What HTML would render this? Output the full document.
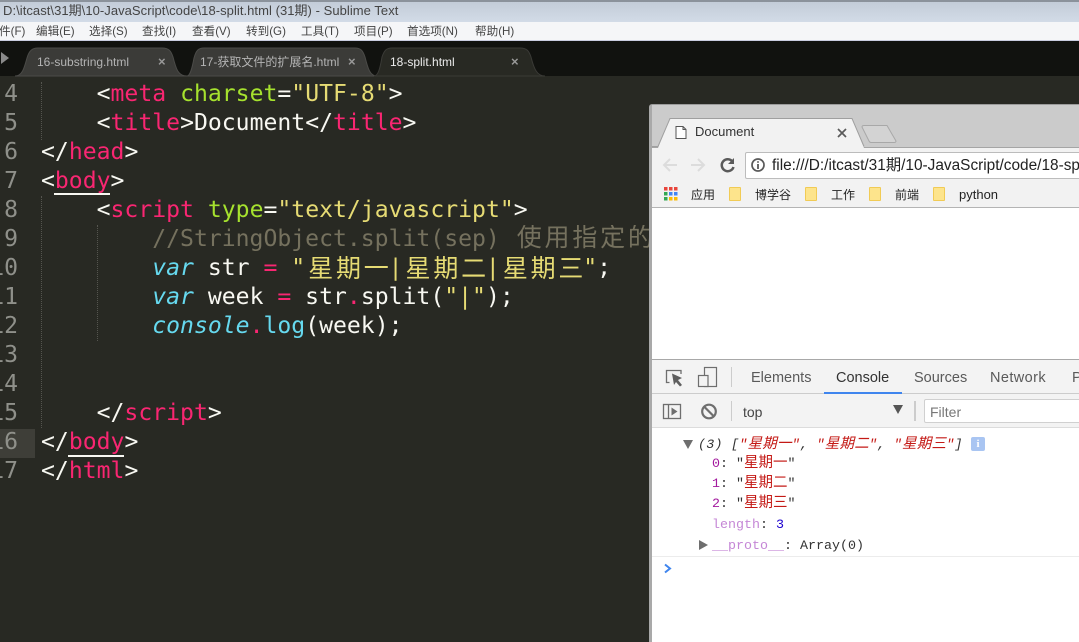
<!DOCTYPE html>
<html><head><meta charset="utf-8"><style>
html,body{margin:0;padding:0;width:1079px;height:642px;overflow:hidden;background:#282923}
*{box-sizing:border-box}
.a{position:absolute;white-space:pre}
.ui{font-family:"Liberation Sans","Noto Sans CJK SC",sans-serif}
.l{position:absolute;left:41px;height:29px;line-height:29px;font-family:"DejaVu Sans Mono","Liberation Mono",monospace;font-size:23.1px;color:#f8f8f2;white-space:pre}
.n{position:absolute;left:0;width:18px;text-align:right;height:29px;line-height:29px;font-family:"DejaVu Sans Mono",monospace;font-size:23.1px;color:#8f908a;white-space:pre;overflow:hidden;direction:rtl}
.p{color:#f92672}.g{color:#a6e22e}.y{color:#e6db74}.c{color:#75715e}.b{color:#66d9ef}.i{font-style:italic}
.z{font-family:"Noto Sans CJK SC",sans-serif;font-size:25px;letter-spacing:2.8px;line-height:0;position:relative;left:3px}
.z.d{top:2px}
.m{position:absolute;top:23px;height:18px;line-height:18px;font-size:11.6px;color:#444;font-family:"Liberation Sans","Noto Sans CJK SC",sans-serif;white-space:pre}
.t{position:absolute;top:54px;font-size:12px;line-height:16px;height:16px;font-family:"Liberation Sans","Noto Sans CJK SC",sans-serif;color:#b4b4b4;white-space:pre}
.x{position:absolute;top:54px;font-size:13px;line-height:16px;color:#999;font-weight:bold;font-family:"Liberation Sans",sans-serif}
.dt{position:absolute;top:369px;font-size:14.5px;line-height:18px;color:#5a5a5a;font-family:"Liberation Sans",sans-serif;white-space:pre}
.con{position:absolute;font-family:"Liberation Mono","Noto Sans CJK SC",monospace;font-size:13.33px;line-height:16px;height:16px;white-space:pre;color:#333}
.r{color:#c41a16}.pu{color:#a31a9e}.pl{color:#c587d6}
.con .z2{font-family:"Noto Sans CJK SC",sans-serif;font-size:14.5px;line-height:0}
.bm{position:absolute;top:187px;font-size:12px;line-height:16px;color:#222;font-family:"Liberation Sans","Noto Sans CJK SC",sans-serif;white-space:pre}
.f{position:absolute;top:187px;width:12px;height:14px;background:#fde48c;border:1px solid #f1cb55;border-radius:1px}
</style></head><body>

<div class="a" style="left:0;top:0;width:1079px;height:22px;background:linear-gradient(#8b929b 0,#8b929b 2px,#c3ccd8 2px,#d2dbe7 100%)"></div>
<div class="a ui" style="left:3px;top:3px;font-size:13px;line-height:16px;color:#444;letter-spacing:.05px">D:\itcast\31期\10-JavaScript\code\18-split.html (31期) - Sublime Text</div>
<div class="a" style="left:0;top:22px;width:1079px;height:19px;background:#f5f6f8;border-bottom:1px solid #c9cde0"></div>
<div class="m" style="left:-1px">件(F)</div>
<div class="m" style="left:36px">编辑(E)</div>
<div class="m" style="left:89px">选择(S)</div>
<div class="m" style="left:142px">查找(I)</div>
<div class="m" style="left:192px">查看(V)</div>
<div class="m" style="left:246px">转到(G)</div>
<div class="m" style="left:301px">工具(T)</div>
<div class="m" style="left:354px">项目(P)</div>
<div class="m" style="left:407px">首选项(N)</div>
<div class="m" style="left:475px">帮助(H)</div>

<div class="a" style="left:0;top:41px;width:1079px;height:35px;background:#11120f"></div>
<svg class="a" style="left:0;top:41px" width="560" height="36" viewBox="0 0 560 36">
<path d="M1 11L9 17L1 23Z" fill="#8a8a8a"/>
<path d="M15 35C22 35 24 28 27 17C29 10 32 7 38 7H162C169 7 171 10 173 16C176 28 178 35 187 35Z" fill="#3b3b38" stroke="#4b4b48"/>
<path d="M187 35C190 35 192 28 194 17C196 10 198 7 204 7H355C361 7 363 10 365 16C368 28 370 35 377 35Z" fill="#3b3b38" stroke="#4b4b48"/>
<path d="M374 35H545C537 35 534 28 531 16C529 10 527 7 520 7H392C386 7 384 10 382 16C380 28 378 35 374 35Z" fill="#282923" stroke="#3a3a36"/>
</svg>
<div class="t" style="left:37px">16-substring.html</div>
<div class="x" style="left:158px">×</div>
<div class="t" style="left:200px">17-获取文件的扩展名.html</div>
<div class="x" style="left:348px">×</div>
<div class="t" style="left:390px;color:#ececec">18-split.html</div>
<div class="x" style="left:511px">×</div>

<div class="a" style="left:0;top:429px;width:35px;height:29px;background:#3e3e38"></div>
<div class="a" style="left:41px;top:82px;width:0;height:58px;border-left:1px dotted #55554f"></div>
<div class="a" style="left:41px;top:196px;width:0;height:232px;border-left:1px dotted #55554f"></div>
<div class="a" style="left:97px;top:225px;width:0;height:116px;border-left:1px dotted #55554f"></div>
<div class="a" style="left:54px;top:193px;width:56px;height:2px;background:#f8f8f2"></div>
<div class="a" style="left:68px;top:455px;width:56px;height:2px;background:#f8f8f2"></div>

<div class="n" style="top:80px">4</div>
<div class="n" style="top:109px">5</div>
<div class="n" style="top:138px">6</div>
<div class="n" style="top:167px">7</div>
<div class="n" style="top:196px">8</div>
<div class="n" style="top:225px">9</div>
<div class="n" style="top:254px">10</div>
<div class="n" style="top:283px">11</div>
<div class="n" style="top:312px">12</div>
<div class="n" style="top:341px">13</div>
<div class="n" style="top:370px">14</div>
<div class="n" style="top:399px">15</div>
<div class="n" style="top:428px">16</div>
<div class="n" style="top:457px">17</div>

<div class="l" style="top:80px">    &lt;<span class="p">meta</span> <span class="g">charset</span>=<span class="y">"UTF-8"</span>&gt;</div>
<div class="l" style="top:109px">    &lt;<span class="p">title</span>&gt;Document&lt;/<span class="p">title</span>&gt;</div>
<div class="l" style="top:138px">&lt;/<span class="p">head</span>&gt;</div>
<div class="l" style="top:167px">&lt;<span class="p">body</span>&gt;</div>
<div class="l" style="top:196px">    &lt;<span class="p">script</span> <span class="g">type</span>=<span class="y">"text/javascript"</span>&gt;</div>
<div class="l c" style="top:225px;width:608px;overflow:hidden">        //StringObject.split(sep) <span class="z">使用指定的分隔符</span></div>
<div class="l" style="top:254px">        <span class="b i">var</span> str <span class="p">=</span> <span class="y">"<span class="z d">星期一</span>|<span class="z d">星期二</span>|<span class="z d">星期三</span>"</span>;</div>
<div class="l" style="top:283px">        <span class="b i">var</span> week <span class="p">=</span> str<span class="p">.</span>split(<span class="y">"|"</span>);</div>
<div class="l" style="top:312px">        <span class="b i">console</span><span class="p">.</span><span class="b">log</span>(week);</div>
<div class="l" style="top:399px">    &lt;/<span class="p">script</span>&gt;</div>
<div class="l" style="top:428px">&lt;/<span class="p">body</span>&gt;</div>
<div class="l" style="top:457px">&lt;/<span class="p">html</span>&gt;</div>

<!-- chrome -->
<div class="a" style="left:649px;top:104px;width:430px;height:538px;background:#cbcbcb;border-left:3px solid #a9a9a9;border-top:1px solid #9b9b9b;border-radius:3px 0 0 0"></div>
<div class="a" style="left:652px;top:147px;width:427px;height:495px;background:#fff"></div>
<div class="a" style="left:652px;top:147px;width:427px;height:61px;background:#f2f2f2;border-top:1px solid #a5a5a5;border-bottom:1px solid #b4b4b4"></div>
<svg class="a" style="left:649px;top:117px" width="270" height="32" viewBox="0 0 270 32">
<path d="M9 31L21 1.500H203L215 31Z" fill="#f2f2f2"/>
<path d="M3 29.500H9L21 1.500H203L215 29.500" fill="none" stroke="#9f9f9f"/>
<path d="M215 8.500H238L247 24C247 25 246 25.500 245 25.500H222C221 25.500 220.500 25 220 24L213 10C213 9 214 8.500 215 8.500Z" fill="#d3d3d3" stroke="#a8a8a8"/>
<path d="M27 9.500H34L37 12.500V21.500H27Z M34 9.500V12.500H37" fill="#fff" stroke="#555" stroke-width="1"/>
<path d="M189 12L197 20M197 12L189 20" stroke="#5a5a5a" stroke-width="1.700"/>
</svg>
<div class="a ui" style="left:695px;top:124px;font-size:13px;line-height:16px;color:#333">Document</div>

<svg class="a" style="left:660px;top:155px" width="80" height="22" viewBox="0 0 80 22">
<path d="M17 10H4M10 4L4 10L10 16" fill="none" stroke="#dcdcdc" stroke-width="2"/>
<path d="M31 10H44M38 4L44 10L38 16" fill="none" stroke="#dcdcdc" stroke-width="2"/>
<path d="M72.500 6.500A6 6 0 1 0 73.500 12" fill="none" stroke="#5a5a5a" stroke-width="2.500"/>
<path d="M74 3V9H68Z" fill="#5a5a5a"/>
</svg>
<div class="a" style="left:745px;top:152px;width:340px;height:27px;background:#fff;border:1px solid #bcbcbc;border-radius:2px"></div>
<svg class="a" style="left:750px;top:157px" width="16" height="16" viewBox="0 0 16 16"><circle cx="8" cy="8" r="6" fill="none" stroke="#5a5a5a" stroke-width="1.700"/><path d="M8 7V12M8 4.200V5.800" stroke="#5a5a5a" stroke-width="1.800"/></svg>
<div class="a" style="left:772px;top:157px;font-size:15.4px;line-height:18px;color:#222;font-family:'Liberation Sans','Noto Sans CJK SC',sans-serif">file:///D:/itcast/31期/10-JavaScript/code/18-sp</div>

<svg class="a" style="left:664px;top:187px" width="14" height="14" viewBox="0 0 14 14">
<rect x="0" y="0" width="3.500" height="3.500" fill="#e8453c"/><rect x="5" y="0" width="3.500" height="3.500" fill="#e8453c"/><rect x="10" y="0" width="3.500" height="3.500" fill="#e8453c"/>
<rect x="0" y="5" width="3.500" height="3.500" fill="#34a853"/><rect x="5" y="5" width="3.500" height="3.500" fill="#4285f4"/><rect x="10" y="5" width="3.500" height="3.500" fill="#4285f4"/>
<rect x="0" y="10" width="3.500" height="3.500" fill="#34a853"/><rect x="5" y="10" width="3.500" height="3.500" fill="#fbbc05"/><rect x="10" y="10" width="3.500" height="3.500" fill="#fbbc05"/>
</svg>
<div class="bm" style="left:691px">应用</div>
<div class="f" style="left:729px"></div><div class="bm" style="left:755px">博学谷</div>
<div class="f" style="left:805px"></div><div class="bm" style="left:831px">工作</div>
<div class="f" style="left:869px"></div><div class="bm" style="left:895px">前端</div>
<div class="f" style="left:933px"></div><div class="bm" style="left:959px;font-size:13px">python</div>

<!-- devtools -->
<div class="a" style="left:652px;top:359px;width:427px;height:35px;background:#f3f3f3;border-top:1px solid #a8a8a8;border-bottom:1px solid #ccc"></div>
<svg class="a" style="left:664px;top:366px" width="56" height="24" viewBox="0 0 56 24">
<path d="M5.500 16.500H2.500V4.500H17V8" fill="none" stroke="#6e6e6e" stroke-width="1.300"/>
<path d="M8 7.500L18 12L14 14L18 19L16 20.500L12 16L10 19Z" fill="#5f5f5f"/>
<rect x="40.500" y="1.500" width="12" height="19" fill="none" stroke="#6e6e6e" stroke-width="1.200"/>
<rect x="34.500" y="9.500" width="9.500" height="11" fill="#f3f3f3" stroke="#6e6e6e" stroke-width="1.200"/>
</svg>
<div class="a" style="left:731px;top:367px;width:1px;height:20px;background:#ccc"></div>
<div class="dt" style="left:751px">Elements</div>
<div class="dt" style="left:836px;color:#333">Console</div>
<div class="dt" style="left:914px">Sources</div>
<div class="dt" style="left:990px;letter-spacing:.4px">Network</div>
<div class="dt" style="left:1072px">P</div>
<div class="a" style="left:824px;top:392px;width:78px;height:2px;background:#3f85ee"></div>

<div class="a" style="left:652px;top:394px;width:427px;height:34px;background:#f3f3f3;border-bottom:1px solid #dcdcdc"></div>
<svg class="a" style="left:662px;top:401px" width="60" height="22" viewBox="0 0 60 22">
<rect x="1.500" y="3.500" width="17" height="14" fill="none" stroke="#6e6e6e" stroke-width="1.300"/>
<path d="M6.500 3.500V17.500" stroke="#6e6e6e" stroke-width="1.300"/>
<path d="M9.500 6.500L15.500 10.500L9.500 14.500Z" fill="#6e6e6e"/>
<circle cx="47" cy="10.500" r="6.800" fill="none" stroke="#6e6e6e" stroke-width="2.200"/>
<path d="M42.500 6L51.500 15" stroke="#6e6e6e" stroke-width="2.200"/>
</svg>
<div class="a" style="left:731px;top:401px;width:1px;height:20px;background:#ccc"></div>
<div class="a ui" style="left:743px;top:403px;font-size:14px;line-height:18px;color:#444">top</div>
<div class="a" style="left:893px;top:405px;width:0;height:0;border-left:5px solid transparent;border-right:5px solid transparent;border-top:9px solid #555"></div>
<div class="a" style="left:914px;top:401px;width:2px;height:20px;background:#ccc"></div>
<div class="a" style="left:924px;top:399px;width:170px;height:24px;background:#fff;border:1px solid #d0d0d0;border-radius:2px"></div>
<div class="a ui" style="left:930px;top:403px;font-size:14px;line-height:18px;color:#777">Filter</div>

<div class="a" style="left:683px;top:440px;width:0;height:0;border-left:5px solid transparent;border-right:5px solid transparent;border-top:9px solid #6e6e6e"></div>
<div class="con" style="left:698px;top:438px;font-style:italic;letter-spacing:.25px">(3) [<span class="r">"<span class="z2">星期一</span>"</span>, <span class="r">"<span class="z2">星期二</span>"</span>, <span class="r">"<span class="z2">星期三</span>"</span>]</div>
<div class="a" style="left:971px;top:437px;width:14px;height:14px;background:#a9c5f2;border-radius:2px;color:#fff;font:bold 11px/14px 'Liberation Serif',serif;text-align:center">i</div>
<div class="con" style="left:712px;top:457px"><span class="pu">0</span>: "<span class="r z2">星期一</span>"</div>
<div class="con" style="left:712px;top:477px"><span class="pu">1</span>: "<span class="r z2">星期二</span>"</div>
<div class="con" style="left:712px;top:497px"><span class="pu">2</span>: "<span class="r z2">星期三</span>"</div>
<div class="con" style="left:712px;top:518px"><span class="pl">length</span>: <span style="color:#1c00cf">3</span></div>
<div class="a" style="left:699px;top:540px;width:0;height:0;border-top:5px solid transparent;border-bottom:5px solid transparent;border-left:9px solid #6e6e6e"></div>
<div class="con" style="left:712px;top:539px"><span class="pl">__proto__</span>: Array(0)</div>
<div class="a" style="left:652px;top:556px;width:427px;height:1px;background:#ececec"></div>
<svg class="a" style="left:663px;top:563px" width="10" height="12" viewBox="0 0 10 12"><path d="M2 1.500L7 5.500L2 9.500" fill="none" stroke="#3f85ee" stroke-width="2"/></svg>
</body></html>
